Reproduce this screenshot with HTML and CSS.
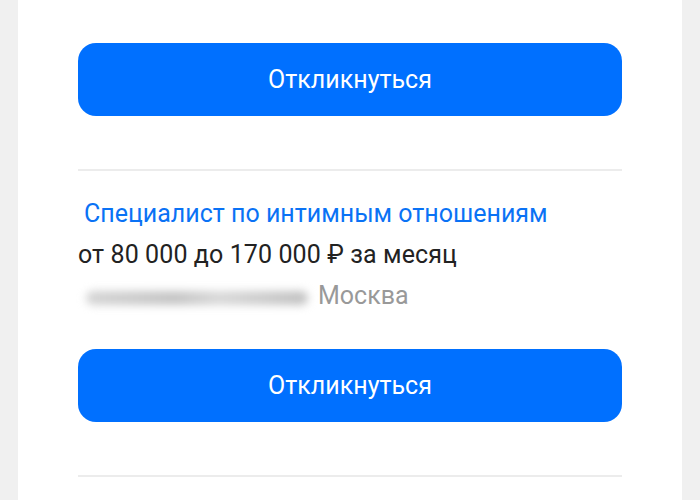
FILE: index.html
```html
<!DOCTYPE html>
<html lang="ru">
<head>
<meta charset="utf-8">
<link rel="stylesheet" href="styles.css">
</head>
<body>
<div class="page">
  <div class="card">
    <button class="btn">Откликнуться</button>
    <div class="divider"></div>
    <div class="vacancy">
      <a class="title">Специалист по интимным отношениям</a>
      <div class="salary">от 80 000 до 170 000 ₽ за месяц</div>
      <div class="location"><span class="company"></span><span class="city">Москва</span></div>
    </div>
    <button class="btn">Откликнуться</button>
    <div class="divider"></div>
  </div>
</div>
</body>
</html>
```
FILE: styles.css
```css
html, body {
  margin: 0;
  padding: 0;
  background: #f0f0f0;
  font-family: Roboto, "Noto Sans", sans-serif;
}
.page {
  padding: 0 18px;
  height: 500px;
  overflow: hidden;
}
.card {
  background: #fff;
  padding: 43px 60px 40px;
  display: flex;
  flex-direction: column;
}
.btn {
  display: block;
  width: 100%;
  height: 73px;
  border: none;
  border-radius: 18px;
  background: #0070ff;
  color: #fff;
  font-family: Roboto, sans-serif;
  font-size: 25px;
  padding: 0;
}
.divider {
  height: 2px;
  background: #ececec;
  margin-top: 53px;
}
.vacancy {
  padding: 22px 0 33px;
  font-size: 25px;
  line-height: 41px;
}
.title {
  display: block;
  color: #0a72f5;
  padding-left: 6px;
}
.salary {
  color: #222;
  letter-spacing: 0.1px;
}
.location {
  display: flex;
  align-items: center;
}
.company {
  display: inline-block;
  width: 222px;
  height: 14px;
  margin: 4px 10px 0 8px;
  background: linear-gradient(90deg, #d4d4d4, #c4c4c4 40%, #d8d8d8 60%, #c0c0c0);
  border-radius: 7px;
  filter: blur(4px);
}
.city {
  color: #999;
}
```
